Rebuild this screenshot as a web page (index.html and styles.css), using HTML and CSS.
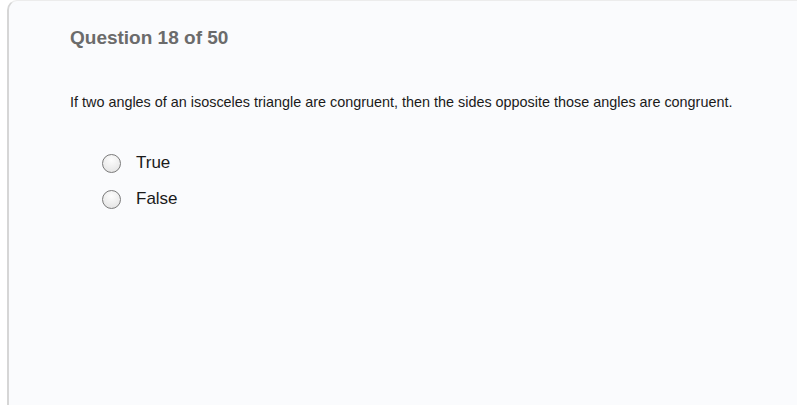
FILE: index.html
```html
<!DOCTYPE html>
<html>
<head>
  <meta charset="UTF-8">
  <title>Question 18 of 50</title>
  <link rel="stylesheet" href="styles.css">
</head>
<body>
  <div class="card">
    <h2 class="qtitle">Question 18 of 50</h2>
    <p class="qtext">If two angles of an isosceles triangle are congruent, then the sides opposite those angles are congruent.</p>
    <div class="answers">
      <label class="answer"><span class="radio"></span>True</label>
      <label class="answer"><span class="radio"></span>False</label>
    </div>
  </div>
</body>
</html>
```

FILE: styles.css
```css
body{
  margin:0;
  background-color:#fff;
  font-family:"Liberation Sans", Arial, sans-serif;
}
.card{
  margin:0 3px 2px 7px;
  height:405px;
  box-sizing:border-box;
  background-color:#fafbfd;
  border-left:2px solid #d6d6d6;
  border-top:1px solid #ececec;
  border-radius:10px 0 0 0;
  padding:26px 0 0 61px;
}
.qtitle{
  margin:0;
  font-size:19px;
  color:#6b6b6b;
  font-weight:bold;
}
.qtext{
  margin:45px 0 0 0;
  font-size:14.4px;
  color:#1a1a1a;
}
.answers{
  display:flex;
  flex-direction:column;
  gap:16px;
  margin-top:43px;
  padding-left:32px;
}
.answer{
  display:flex;
  align-items:center;
  gap:15px;
  font-size:17px;
  color:#1a1a1a;
}
.radio{
  width:19px;
  height:19px;
  box-sizing:border-box;
  border-radius:50%;
  border:1.5px solid #7a7a7a;
  background:radial-gradient(circle at 50% 30%, #fdfdfd, #e0e0e0);
}
```
